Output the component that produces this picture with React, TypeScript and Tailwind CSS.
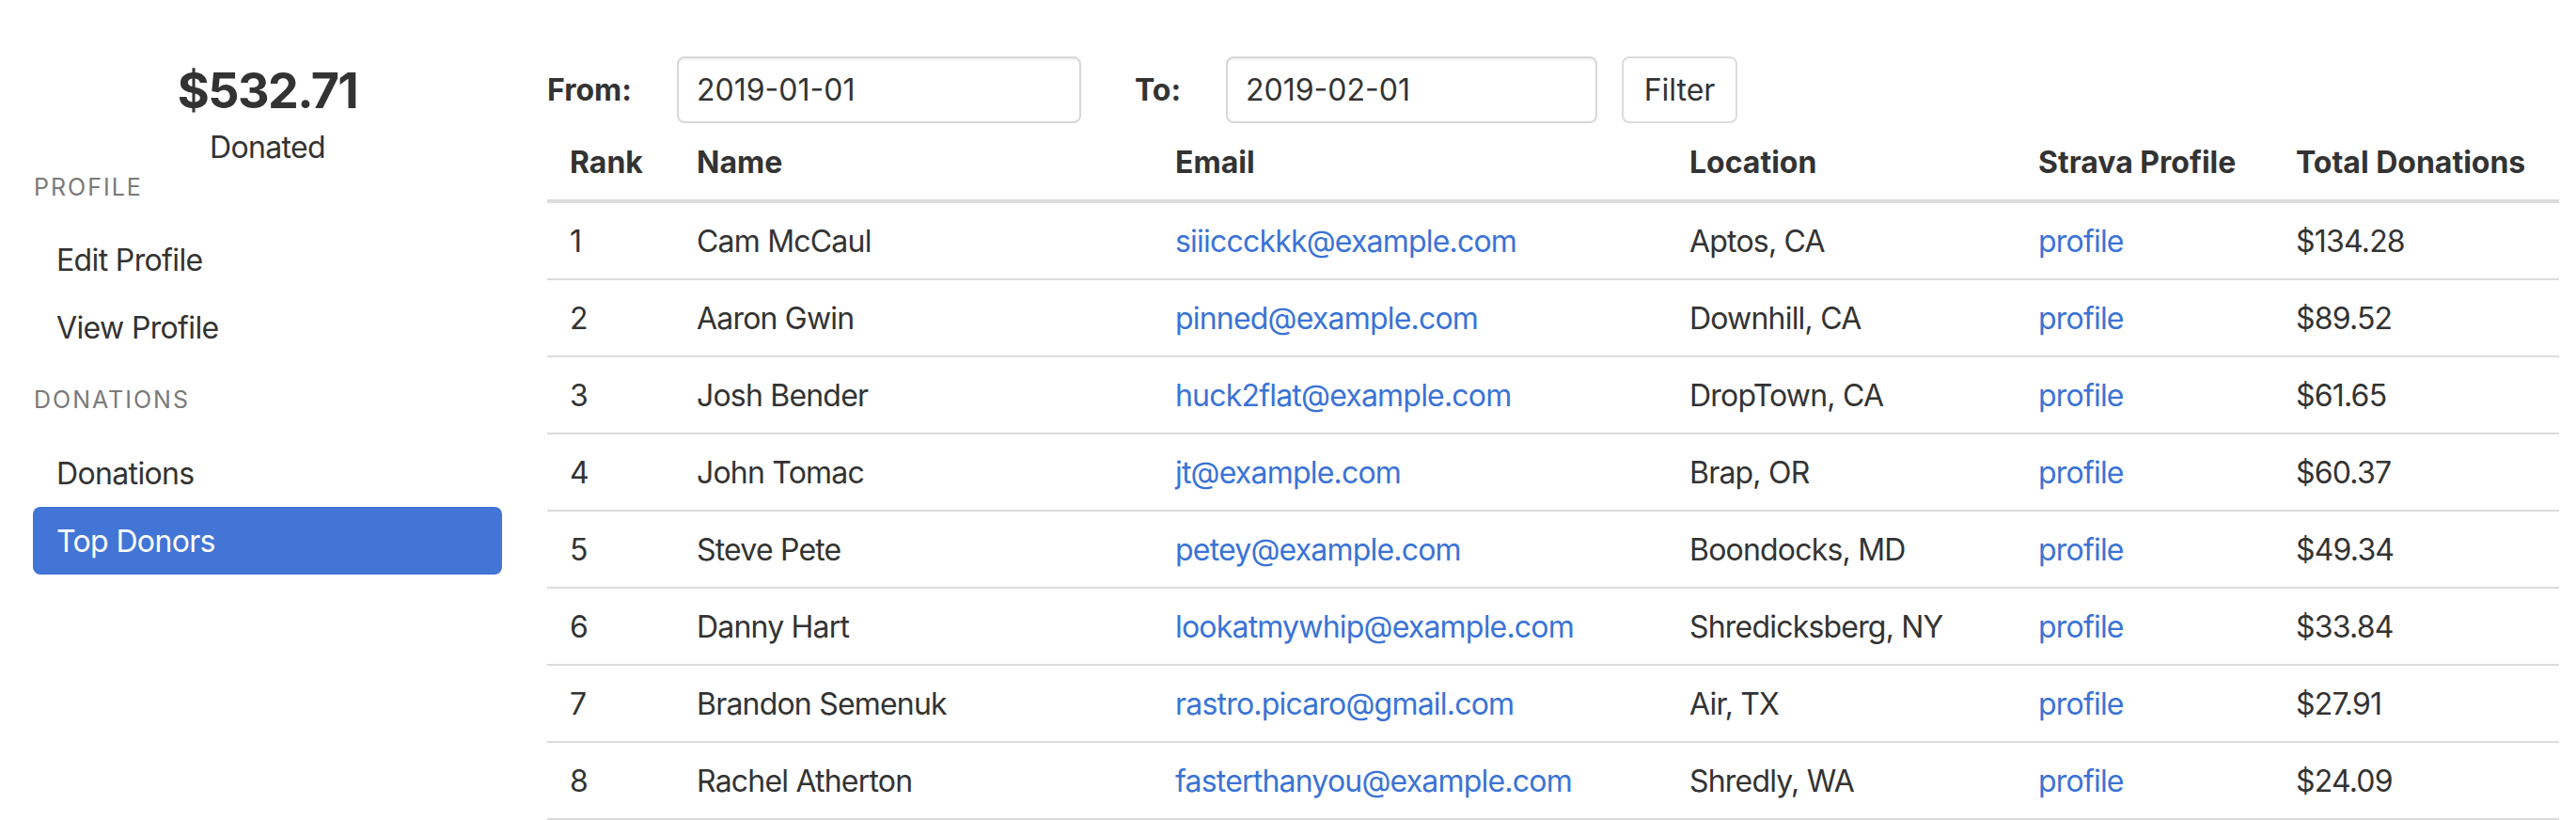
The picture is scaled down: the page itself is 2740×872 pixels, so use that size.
import React from "react";

const donors = [
  { rank: 1, name: "Cam McCaul", email: "siiiccckkk@example.com", location: "Aptos, CA", total: "$134.28" },
  { rank: 2, name: "Aaron Gwin", email: "pinned@example.com", location: "Downhill, CA", total: "$89.52" },
  { rank: 3, name: "Josh Bender", email: "huck2flat@example.com", location: "DropTown, CA", total: "$61.65" },
  { rank: 4, name: "John Tomac", email: "jt@example.com", location: "Brap, OR", total: "$60.37" },
  { rank: 5, name: "Steve Pete", email: "petey@example.com", location: "Boondocks, MD", total: "$49.34" },
  { rank: 6, name: "Danny Hart", email: "lookatmywhip@example.com", location: "Shredicksberg, NY", total: "$33.84" },
  { rank: 7, name: "Brandon Semenuk", email: "rastro.picaro@gmail.com", location: "Air, TX", total: "$27.91" },
  { rank: 8, name: "Rachel Atherton", email: "fasterthanyou@example.com", location: "Shredly, WA", total: "$24.09" },
];

const navLinkClass = "block rounded-[8px] px-[25px] pt-[13px] pb-[11px] leading-[48px] tracking-[-0.02em]";
const headingClass = "h-[36px] pl-px text-[25px] uppercase leading-[36px] tracking-[0.08em] text-[#7a7a7a]";
const thClass = "px-[24px] pt-[18px] pb-[15px] text-left font-bold leading-[48px]";
const tdClass = "px-[24px] pt-[17px] pb-[15px] leading-[48px] tracking-[-0.025em]";

function Sidebar() {
  return (
    <aside className="w-[499px] shrink-0 pt-[71px]">
      <div className="text-center">
        <p className="text-[52px] font-bold leading-[52px] tracking-[-0.03em] text-[#333]">$532.71</p>
        <p className="mt-[10px] text-[32px] leading-[48px] tracking-[-0.02em] text-[#333]">Donated</p>
      </div>
      <h6 className={headingClass}>Profile</h6>
      <nav className="mt-[23px] text-[32px] text-[#333]">
        <a className={navLinkClass}>Edit Profile</a>
        <a className={navLinkClass}>View Profile</a>
      </nav>
      <h6 className={`${headingClass} mt-[23px]`}>Donations</h6>
      <nav className="mt-[24px] text-[32px] text-[#333]">
        <a className={navLinkClass}>Donations</a>
        <a className={`${navLinkClass} bg-[#4275d5] text-white`}>Top Donors</a>
      </nav>
    </aside>
  );
}

function FilterForm() {
  return (
    <form className="flex h-[71px] items-center text-[32px] text-[#333]">
      <label className="w-[138px] font-bold">From:</label>
      <input
        defaultValue="2019-01-01"
        className="h-[71px] w-[430px] rounded-[8px] border-2 border-[#d8d8d8] px-[19px] shadow-[inset_0_2px_2px_rgba(0,0,0,0.06)] outline-none"
      />
      <label className="ml-[57px] w-[97px] font-bold">To:</label>
      <input
        defaultValue="2019-02-01"
        className="h-[71px] w-[395px] rounded-[8px] border-2 border-[#d8d8d8] px-[19px] shadow-[inset_0_2px_2px_rgba(0,0,0,0.06)] outline-none"
      />
      <button
        type="button"
        className="ml-[26px] h-[71px] w-[123px] rounded-[8px] border-2 border-[#dcdcdc] bg-white text-[#333]"
      >
        Filter
      </button>
    </form>
  );
}

function DonorsTable() {
  return (
    <table className="w-[2140px] table-fixed border-collapse text-[32px] text-[#333]">
      <colgroup>
        <col className="w-[135px]" />
        <col className="w-[509px]" />
        <col className="w-[547px]" />
        <col className="w-[371px]" />
        <col className="w-[274px]" />
        <col className="w-[304px]" />
      </colgroup>
      <thead>
        <tr className="border-b-4 border-[#dcdcdc]">
          <th className={thClass}>Rank</th>
          <th className={thClass}>Name</th>
          <th className={thClass}>Email</th>
          <th className={thClass}>Location</th>
          <th className={thClass}>Strava Profile</th>
          <th className={thClass}>Total Donations</th>
        </tr>
      </thead>
      <tbody>
        {donors.map((donor) => (
          <tr key={donor.rank} className="border-b-2 border-[#dcdcdc]">
            <td className={tdClass}>{donor.rank}</td>
            <td className={tdClass}>{donor.name}</td>
            <td className={`${tdClass} text-[#3a73d6]`}>{donor.email}</td>
            <td className={tdClass}>{donor.location}</td>
            <td className={`${tdClass} text-[#3a73d6]`}>profile</td>
            <td className={tdClass}>{donor.total}</td>
          </tr>
        ))}
      </tbody>
    </table>
  );
}

export default function App() {
  return (
    <div className="flex h-[872px] w-[2740px] overflow-hidden bg-white pl-[35px] font-['Inter',sans-serif]">
      <Sidebar />
      <main className="ml-[48px] pt-[60px]">
        <FilterForm />
        <DonorsTable />
      </main>
    </div>
  );
}
